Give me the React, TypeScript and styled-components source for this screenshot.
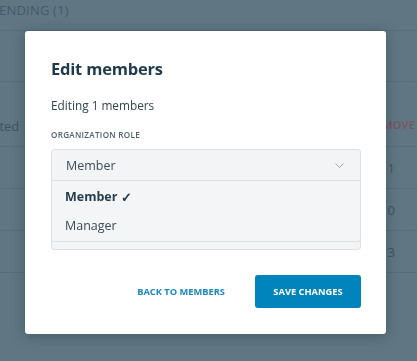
import React from 'react';
import styled, { createGlobalStyle } from 'styled-components';

const GlobalStyle = createGlobalStyle`
  html, body {
    margin: 0;
    padding: 0;
    width: 100%;
    height: 100%;
    overflow: hidden;
  }
  body {
    font-family: "Open Sans", "Liberation Sans", sans-serif;
    background: #607783;
  }
`;

const Page = styled.div`
  width: 417px;
  height: 361px;
  background: #607783;
  color: #3e5462;
  overflow: hidden;
`;

const TabBar = styled.div`
  height: 29px;
  border-bottom: 1px solid #576d79;
  display: flex;
  align-items: flex-start;
  padding-top: 1px;
  margin-left: -9px;
`;

const Tab = styled.span`
  font-size: 13px;
  letter-spacing: 0.2px;
  color: #43596a;
`;

const Spacer = styled.div`
  height: 50px;
  border-bottom: 1px solid #576d79;
`;

const HeaderRow = styled.div`
  height: 65px;
  border-bottom: 1px solid #576d79;
  display: flex;
  justify-content: space-between;
  align-items: flex-start;
  padding-top: 35px;
  box-sizing: border-box;
  margin-left: -22px;
  margin-right: 2px;
  font-size: 13px;
`;

const RemoveLabel = styled.span`
  color: #7a5560;
  font-weight: 600;
  font-size: 11px;
  letter-spacing: 0.2px;
`;

const Row = styled.div`
  height: 42px;
  border-bottom: 1px solid #576d79;
  display: flex;
  justify-content: flex-end;
  align-items: center;
  padding-right: 22px;
  box-sizing: border-box;
  font-size: 13px;
`;

const Overlay = styled.div`
  position: fixed;
  inset: 0;
`;

const Modal = styled.div`
  position: absolute;
  left: 25px;
  top: 31px;
  width: 361px;
  height: 303px;
  background: #fff;
  border-radius: 3px;
  box-shadow: 0 2px 14px rgba(20, 35, 45, 0.35);
  padding: 27px 25px 0 26px;
  box-sizing: border-box;
  display: flex;
  flex-direction: column;
`;

const Title = styled.h2`
  margin: 0;
  font-size: 16.5px;
  font-weight: 700;
  letter-spacing: -0.2px;
  color: #1e3a4b;
  line-height: 22px;
`;

const Subtitle = styled.p`
  margin: 16px 0 0;
  font-size: 11.8px;
  color: #2f4552;
  line-height: 18px;
`;

const FieldLabel = styled.div`
  margin-top: 15px;
  font-size: 8.1px;
  font-weight: 600;
  letter-spacing: 0.3px;
  color: #4d6170;
  line-height: 12px;
`;

const SelectBox = styled.div`
  margin-top: 8px;
  height: 101px;
  border: 1px solid #dde1e5;
  border-radius: 3px;
  background: #f3f4f6;
  box-sizing: border-box;
  display: flex;
  flex-direction: column;
`;

const SelectHead = styled.div`
  height: 31px;
  flex: none;
  display: flex;
  align-items: center;
  justify-content: space-between;
  padding: 0 16px 0 14px;
  box-sizing: border-box;
  border-bottom: 1px solid #dde1e5;
  font-size: 12.5px;
  color: #3b4f5c;
`;

const Menu = styled.ul`
  list-style: none;
  margin: 0 -1px;
  padding: 1px 0 0;
  height: 61px;
  box-sizing: border-box;
  border: 1px solid #dde1e5;
  border-top: none;
  border-radius: 0 0 3px 3px;
  background: #f4f5f7;
`;

const MenuItem = styled.li<{ $selected?: boolean }>`
  height: 29px;
  display: flex;
  align-items: center;
  padding-left: 13px;
  font-size: 12.5px;
  font-weight: ${(p) => (p.$selected ? 700 : 400)};
  color: ${(p) => (p.$selected ? '#253d4c' : '#384c59')};
`;

const Check = styled.span`
  margin-left: 4px;
  font-size: 13px;
`;

const Actions = styled.div`
  margin-top: 25px;
  display: flex;
  justify-content: flex-end;
  align-items: center;
  gap: 30px;
`;

const LinkButton = styled.button`
  border: none;
  background: none;
  padding: 0;
  font-family: inherit;
  font-size: 9.3px;
  font-weight: 700;
  color: #1c88c1;
  cursor: pointer;
`;

const PrimaryButton = styled.button`
  width: 106px;
  height: 33px;
  border: none;
  border-radius: 3px;
  background: #0184bc;
  color: #fff;
  font-family: inherit;
  font-size: 9.3px;
  font-weight: 700;
  cursor: pointer;
`;

const Chevron = () => (
  <svg width="9" height="5" viewBox="0 0 9 5" fill="none">
    <path d="M0.5 0.5L4.5 4.5L8.5 0.5" stroke="#9aa6b0" strokeWidth="1" />
  </svg>
);

const App = () => {
  return (
    <>
      <GlobalStyle />
      <Page>
        <TabBar>
          <Tab>PENDING (1)</Tab>
        </TabBar>
        <Spacer />
        <HeaderRow>
          <span>Invited</span>
          <RemoveLabel>REMOVE</RemoveLabel>
        </HeaderRow>
        <Row>1</Row>
        <Row>0</Row>
        <Row>3</Row>
      </Page>
      <Overlay>
        <Modal>
          <Title>Edit members</Title>
          <Subtitle>Editing 1 members</Subtitle>
          <FieldLabel>ORGANIZATION ROLE</FieldLabel>
          <SelectBox>
            <SelectHead>
              <span>Member</span>
              <Chevron />
            </SelectHead>
            <Menu>
              <MenuItem $selected>
                Member
                <Check>✓</Check>
              </MenuItem>
              <MenuItem>Manager</MenuItem>
            </Menu>
          </SelectBox>
          <Actions>
            <LinkButton>BACK TO MEMBERS</LinkButton>
            <PrimaryButton>SAVE CHANGES</PrimaryButton>
          </Actions>
        </Modal>
      </Overlay>
    </>
  );
};

export default App;
